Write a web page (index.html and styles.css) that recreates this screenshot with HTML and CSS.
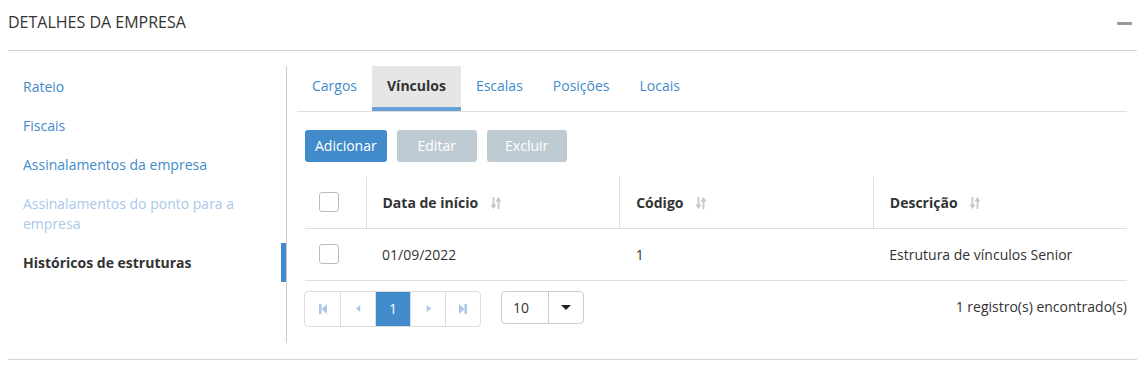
FILE: index.html
```html
<!DOCTYPE html>
<html lang="pt-br">
<head>
    <meta charset="UTF-8">
    <title>Detalhes da empresa</title>
    <link rel="stylesheet" href="styles.css">
</head>
<body>
    <div class="panel">
        <div class="panel-heading">
            <h2>Detalhes da empresa</h2>
            <span class="collapse-btn"></span>
        </div>
        <div class="panel-body">
            <ul class="side-nav">
                <li><a href="#">Rateio</a></li>
                <li><a href="#">Fiscais</a></li>
                <li><a href="#">Assinalamentos da empresa</a></li>
                <li><a href="#" class="disabled">Assinalamentos do ponto para a empresa</a></li>
                <li class="active"><a href="#">Históricos de estruturas</a></li>
            </ul>
            <div class="main">
                <ul class="tabs">
                    <li><a href="#">Cargos</a></li>
                    <li class="active"><a href="#">Vínculos</a></li>
                    <li><a href="#">Escalas</a></li>
                    <li><a href="#">Posições</a></li>
                    <li><a href="#">Locais</a></li>
                </ul>
                <div class="tab-content">
                    <div class="toolbar">
                        <button class="btn btn-primary">Adicionar</button>
                        <button class="btn btn-disabled">Editar</button>
                        <button class="btn btn-disabled">Excluir</button>
                    </div>
                    <table class="grid">
                        <thead>
                            <tr>
                                <th class="col-check"><span class="checkbox"></span></th>
                                <th>Data de início <svg class="sort" viewBox="0 0 10 12"><path d="M2.5 0v10M0.5 7.5l2 3 2-3M7.5 12V2M5.5 4.5l2-3 2 3" fill="none" stroke="#c8c8c8" stroke-width="1.8"/></svg></th>
                                <th>Código <svg class="sort" viewBox="0 0 10 12"><path d="M2.5 0v10M0.5 7.5l2 3 2-3M7.5 12V2M5.5 4.5l2-3 2 3" fill="none" stroke="#c8c8c8" stroke-width="1.8"/></svg></th>
                                <th>Descrição <svg class="sort" viewBox="0 0 10 12"><path d="M2.5 0v10M0.5 7.5l2 3 2-3M7.5 12V2M5.5 4.5l2-3 2 3" fill="none" stroke="#c8c8c8" stroke-width="1.8"/></svg></th>
                            </tr>
                        </thead>
                        <tbody>
                            <tr>
                                <td class="col-check"><span class="checkbox"></span></td>
                                <td>01/09/2022</td>
                                <td>1</td>
                                <td>Estrutura de vínculos Senior</td>
                            </tr>
                        </tbody>
                    </table>
                    <div class="paginator">
                        <div class="pages">
                            <span class="page"><svg viewBox="0 0 8 10"><path d="M0 0h2.5v10H0zM8 0v10L2.5 5z" fill="#a9c8ea"/></svg></span>
                            <span class="page"><svg viewBox="0 0 8 10" class="small"><path d="M6 1v8L1 5z" fill="#a9c8ea"/></svg></span>
                            <span class="page current">1</span>
                            <span class="page"><svg viewBox="0 0 8 10" class="small"><path d="M2 1v8l5-4z" fill="#a9c8ea"/></svg></span>
                            <span class="page"><svg viewBox="0 0 8 10"><path d="M5.5 0H8v10H5.5zM0 0v10l5.5-5z" fill="#a9c8ea"/></svg></span>
                        </div>
                        <div class="page-size">
                            <span class="value">10</span>
                            <span class="caret"></span>
                        </div>
                        <div class="count">1 registro(s) encontrado(s)</div>
                    </div>
                </div>
            </div>
        </div>
    </div>
</body>
</html>
```

FILE: styles.css
```css
* {
    margin: 0;
    padding: 0;
    box-sizing: border-box;
}
body {
    font-family: 'Open Sans', 'Liberation Sans', sans-serif;
    font-size: 14px;
    color: #333;
    background: #fff;
}
a {
    text-decoration: none;
}
ul {
    list-style: none;
}
.panel {
    margin: 0 10px 0 8px;
    border-bottom: 1px solid #d2d2d2;
}
.panel-heading {
    display: flex;
    align-items: center;
    justify-content: space-between;
    padding: 11px 0 17px;
    border-bottom: 1px solid #d2d2d2;
}
.panel-heading h2 {
    font-size: 16px;
    font-weight: normal;
    line-height: 22px;
    text-transform: uppercase;
    color: #333;
}
.collapse-btn {
    width: 15px;
    height: 3px;
    margin-right: 5px;
    margin-top: 3px;
    background: #999;
    border-radius: 1px;
}
.panel-body {
    display: flex;
    padding: 15px 0 16px;
}
.side-nav {
    width: 279px;
    flex-shrink: 0;
    padding-top: 1px;
    border-right: 1px solid #ccc;
}
.side-nav li {
    position: relative;
}
.side-nav a {
    display: block;
    padding: 9.5px 40px 9.5px 15px;
    line-height: 20px;
    color: #428bca;
}
.side-nav a.disabled {
    color: #a9c8ea;
}
.side-nav li.active a {
    color: #333;
    font-weight: bold;
}
.side-nav li.active::after {
    content: '';
    position: absolute;
    top: 0;
    bottom: 0;
    right: 0;
    width: 5px;
    background: #428bca;
}
.main {
    flex: 1;
    padding: 0 10px;
}
.tabs {
    display: flex;
    border-bottom: 1px solid #ddd;
}
.tabs a {
    display: block;
    padding: 10px 15px 11px;
    line-height: 20px;
    color: #428bca;
    border-bottom: 4px solid transparent;
}
.tabs li.active a {
    background: #e6e6e6;
    color: #333;
    font-weight: bold;
    border-bottom-color: #69a2d9;
}
.tab-content {
    padding: 0 0 16px 8px;
}
.toolbar {
    display: flex;
    gap: 10px;
    margin-top: 18px;
}
.btn {
    font-family: inherit;
    font-size: 14px;
    line-height: 20px;
    min-width: 80px;
    padding: 6px 10px;
    border: none;
    border-radius: 3px;
    color: #fff;
}
.btn-primary {
    background: #428bca;
}
.btn-disabled {
    background: #bfcbd3;
}
.grid {
    width: 100%;
    margin-top: 15px;
    border-collapse: collapse;
    table-layout: fixed;
}
.grid th,
.grid td {
    height: 51px;
    padding: 0 16px;
    text-align: left;
    border-bottom: 1px solid #ddd;
}
.grid td {
    height: 52px;
}
.grid th {
    font-weight: bold;
}
.grid th + th {
    border-left: 1px solid #ddd;
}
.grid .col-check {
    width: 61px;
    padding: 0 0 0 14px;
}
.checkbox {
    display: block;
    width: 20px;
    height: 20px;
    border: 1px solid #bbb;
    border-radius: 3px;
    background: #fff;
}
.sort {
    width: 10px;
    height: 12px;
    margin-left: 9px;
    vertical-align: -1px;
}
.paginator {
    display: flex;
    align-items: center;
    margin-top: 10px;
    height: 36px;
    margin-left: -1px;
}
.pages {
    display: flex;
    height: 36px;
    border: 1px solid #ddd;
    border-radius: 4px;
    overflow: hidden;
}
.page {
    width: 35px;
    display: flex;
    align-items: center;
    justify-content: center;
    color: #fff;
}
.page + .page {
    border-left: 1px solid #ddd;
}
.page.current {
    background: #428bca;
}
.page svg {
    width: 8px;
    height: 10px;
}
.page svg.small {
    width: 7px;
    height: 9px;
}
.page-size {
    display: flex;
    height: 33px;
    margin-left: 20px;
    margin-top: -3px;
    border: 1px solid #ccc;
    border-radius: 4px;
}
.page-size .value {
    width: 47px;
    padding-left: 11px;
    line-height: 31px;
    border-right: 1px solid #ccc;
}
.page-size .caret {
    width: 34px;
    display: flex;
    align-items: center;
    justify-content: center;
}
.page-size .caret::before {
    content: '';
    border-left: 5px solid transparent;
    border-right: 5px solid transparent;
    border-top: 5px solid #222;
}
.count {
    margin-left: auto;
    margin-top: -4px;
}
```
